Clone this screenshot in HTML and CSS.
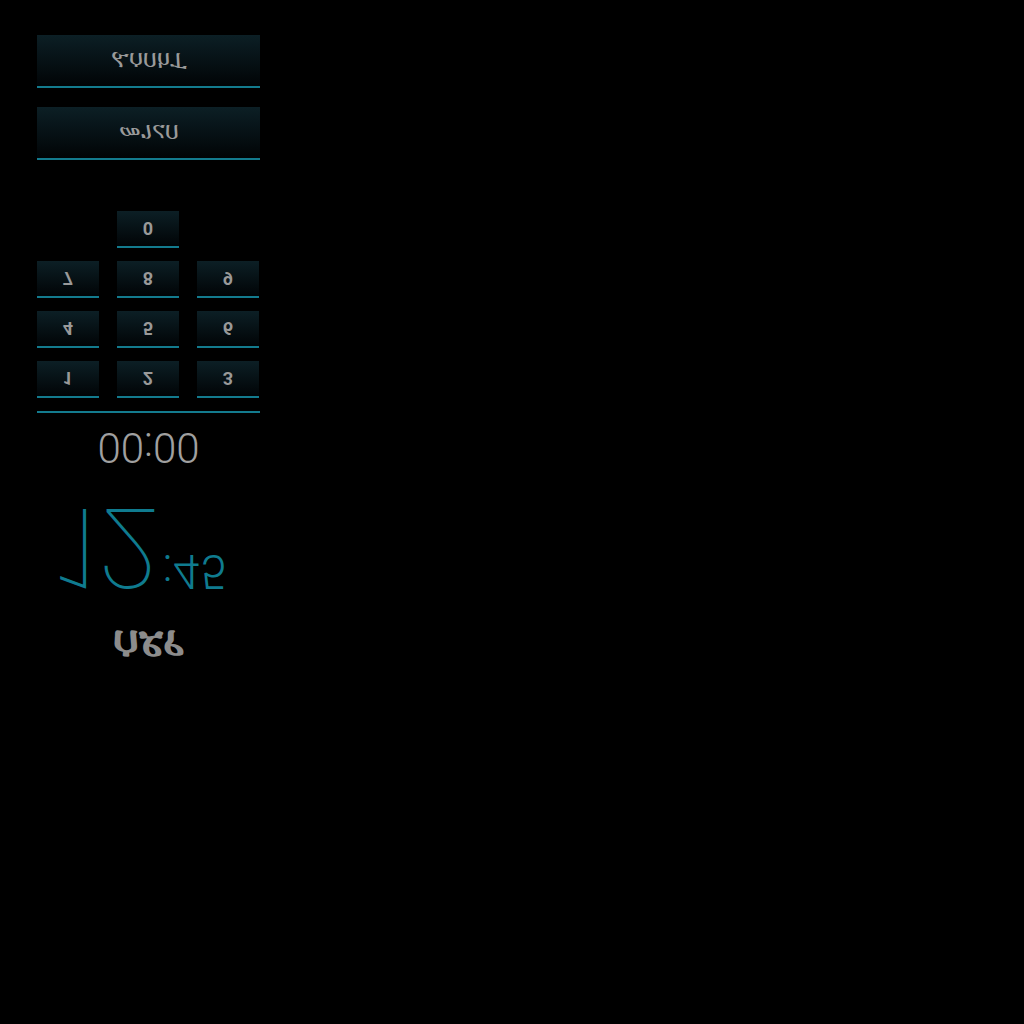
FILE: index.html
```html
<!DOCTYPE html>
<html>
<head>
<meta charset="utf-8">
<link rel="stylesheet" href="styles.css">
</head>
<body>
<div class="app">
  <div class="btn"><span class="flip btn-label">ፈሰበከፐ</span></div>
  <div class="btn"><span class="flip btn-label">መገረበ</span></div>
  <div class="keypad">
    <div class="gap-cell"></div>
    <div class="key"><span class="flip">0</span></div>
    <div class="gap-cell"></div>
    <div class="key"><span class="flip">7</span></div>
    <div class="key"><span class="flip">8</span></div>
    <div class="key"><span class="flip">9</span></div>
    <div class="key"><span class="flip">4</span></div>
    <div class="key"><span class="flip">5</span></div>
    <div class="key"><span class="flip">6</span></div>
    <div class="key"><span class="flip">1</span></div>
    <div class="key"><span class="flip">2</span></div>
    <div class="key"><span class="flip">3</span></div>
  </div>
  <div class="rule"></div>
  <div class="timer flip">00:00</div>
  <div class="clock">
    <span class="hh flip">12</span><span class="mm flip">:45</span>
  </div>
  <div class="title flip">ሰደየ</div>
</div>
</body>
</html>
```
FILE: styles.css
```css
html, body {
  margin: 0;
  padding: 0;
  background: #000;
}
body {
  width: 1024px;
  height: 1024px;
  font-family: Roboto, "Noto Sans", "DejaVu Sans", sans-serif;
  color: #9a9a9a;
}
.flip {
  display: inline-block;
  transform: scaleY(-1);
}
.app {
  width: 223px;
  margin-left: 37px;
  padding-top: 35px;
  display: flex;
  flex-direction: column;
}
.btn {
  height: 51px;
  border-bottom: 2px solid #137b8e;
  background: linear-gradient(#0c1f25, #010406);
  display: flex;
  align-items: center;
  justify-content: center;
  margin-bottom: 19px;
}
.btn + .btn {
  margin-bottom: 51px;
}
.btn-label {
  font-size: 24px;
  font-weight: 400;
  line-height: 1;
  color: #9a9a9a;
}
.keypad {
  display: grid;
  grid-template-columns: repeat(3, 62px);
  column-gap: 18px;
  row-gap: 13px;
}
.key {
  height: 35px;
  border-bottom: 2px solid #137b8e;
  background: linear-gradient(#0c1f25, #010406);
  display: flex;
  align-items: center;
  justify-content: center;
  font-size: 18px;
  font-weight: 700;
  color: #999999;
}
.rule {
  margin-top: 13px;
  height: 2px;
  background: #137b8e;
}
.timer {
  margin-top: 13px;
  font-size: 42px;
  line-height: 1;
  font-weight: 300;
  text-align: center;
  color: #a0a0a0;
}
.clock {
  margin-top: 23px;
  padding-left: 13px;
  display: flex;
  align-items: flex-end;
  color: #0f7b8f;
}
.hh {
  font-size: 112px;
  line-height: 1;
  font-weight: 100;
  letter-spacing: -13px;
}
.mm {
  font-size: 48px;
  line-height: 1;
  font-weight: 300;
  margin-left: 16px;
  margin-bottom: 8px;
}
.title {
  margin-top: 21px;
  font-size: 44px;
  font-weight: 700;
  line-height: 1;
  text-align: center;
  color: #8c8c8c;
}
```
